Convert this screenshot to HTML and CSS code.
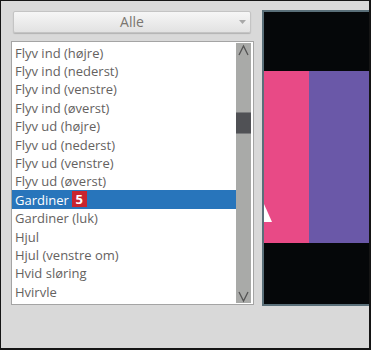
FILE: index.html
```html
<!DOCTYPE html>
<html>
<head>
<meta charset="utf-8">
<link rel="stylesheet" href="styles.css">
</head>
<body>
<div class="window">
  <div class="left">
    <div class="dropdown">
      <span class="dd-label">Alle</span>
      <svg class="dd-arrow" width="7" height="4" viewBox="0 0 7 4"><path d="M0 0 L7 0 L3.5 4 Z" fill="#a8a8a8"/></svg>
    </div>
    <div class="list">
      <ul class="items">
        <li>Flyv ind (højre)</li>
        <li>Flyv ind (nederst)</li>
        <li>Flyv ind (venstre)</li>
        <li>Flyv ind (øverst)</li>
        <li>Flyv ud (højre)</li>
        <li>Flyv ud (nederst)</li>
        <li>Flyv ud (venstre)</li>
        <li>Flyv ud (øverst)</li>
        <li class="selected">Gardiner <span class="badge">5</span></li>
        <li>Gardiner (luk)</li>
        <li>Hjul</li>
        <li>Hjul (venstre om)</li>
        <li>Hvid sløring</li>
        <li>Hvirvle</li>
      </ul>
      <div class="scrollbar">
        <svg class="arrow" width="15" height="14" viewBox="0 0 15 14"><polyline points="3,12 7.5,3 12,12" fill="none" stroke="#545454" stroke-width="1.3"/></svg>
        <div class="track">
          <div class="thumb"></div>
        </div>
        <svg class="arrow" width="15" height="14" viewBox="0 0 15 14"><polyline points="3,3 7.5,12 12,3" fill="none" stroke="#545454" stroke-width="1.3"/></svg>
      </div>
    </div>
  </div>
  <div class="preview">
    <div class="pv-black"></div>
    <div class="pv-colors">
      <div class="pv-pink">
        <svg class="tri" width="8" height="18" viewBox="0 0 8 18"><path d="M0 0 L8 18 L0 18 Z" fill="#ffffff"/></svg>
      </div>
      <div class="pv-purple"></div>
    </div>
    <div class="pv-black pv-bottom"></div>
  </div>
</div>
</body>
</html>
```

FILE: styles.css
```css
html, body {
  margin: 0;
  padding: 0;
  background: #d9d9d9;
}
.window {
  width: 371px;
  height: 350px;
  box-sizing: border-box;
  border: 1px solid #151515;
  border-bottom-width: 2px;
  border-right-width: 2px;
  background: #d9d9d9;
  display: flex;
  align-items: flex-start;
  gap: 8px;
  padding: 9px 0 0 10px;
  overflow: hidden;
  font-family: "Open Sans", "Noto Sans", sans-serif;
}
.left {
  width: 243px;
  display: flex;
  flex-direction: column;
  flex: none;
}
.dropdown {
  margin: 1px 0 0 2px;
  width: 238px;
  height: 22px;
  box-sizing: border-box;
  border: 1px solid #c4c4c4;
  border-radius: 2px;
  background: linear-gradient(#f6f6f6, #e2e2e2);
  box-shadow: 0 1px 1px rgba(0,0,0,0.18);
  position: relative;
  display: flex;
  align-items: center;
  justify-content: center;
}
.dd-label {
  font-size: 14px;
  color: #7a7670;
  line-height: 20px;
}
.dd-arrow {
  position: absolute;
  right: 4px;
  top: 8px;
}
.list {
  margin-top: 8px;
  height: 264px;
  box-sizing: border-box;
  border: 1px solid #a4a4a4;
  background: #ffffff;
  display: flex;
  padding: 1px 2px 1px 0;
}
.items {
  list-style: none;
  margin: 0;
  padding: 0;
  flex: 1;
  overflow: hidden;
}
.items li {
  height: 18.4px;
  box-sizing: border-box;
  padding: 1px 0 0 3px;
  font-size: 13px;
  color: #65625f;
  white-space: nowrap;
  display: flex;
  align-items: center;
}
.items li.selected {
  background: #2875bb;
  color: #ffffff;
}
.badge {
  display: inline-block;
  margin: -1px 0 0 3px;
  width: 15px;
  height: 16px;
  line-height: 16px;
  text-align: center;
  background: #c9252f;
  color: #ffffff;
  font-weight: bold;
  font-size: 13px;
}
.scrollbar {
  width: 15px;
  background: #a9aaa8;
  display: flex;
  flex-direction: column;
  flex: none;
}
.arrow {
  display: block;
  flex: none;
}
.track {
  flex: 1;
  padding-top: 55px;
}
.thumb {
  height: 22px;
  box-sizing: border-box;
  background: #505155;
  border-top: 1px solid #7a7b7d;
  border-bottom: 1px solid #7a7b7d;
}
.preview {
  flex: 1;
  height: 296px;
  margin-right: -6px;
  box-sizing: border-box;
  border: 2px solid #5a6f79;
  background: #050709;
  display: flex;
  flex-direction: column;
}
.pv-black {
  height: 59px;
  background: #050709;
  flex: none;
}
.pv-bottom {
  flex: 1;
}
.pv-colors {
  height: 172px;
  display: flex;
  flex: none;
}
.pv-pink {
  width: 45px;
  background: #e84a86;
  position: relative;
}
.tri {
  position: absolute;
  left: 0;
  top: 133px;
}
.pv-purple {
  flex: 1;
  background: #6a58a8;
}
```
